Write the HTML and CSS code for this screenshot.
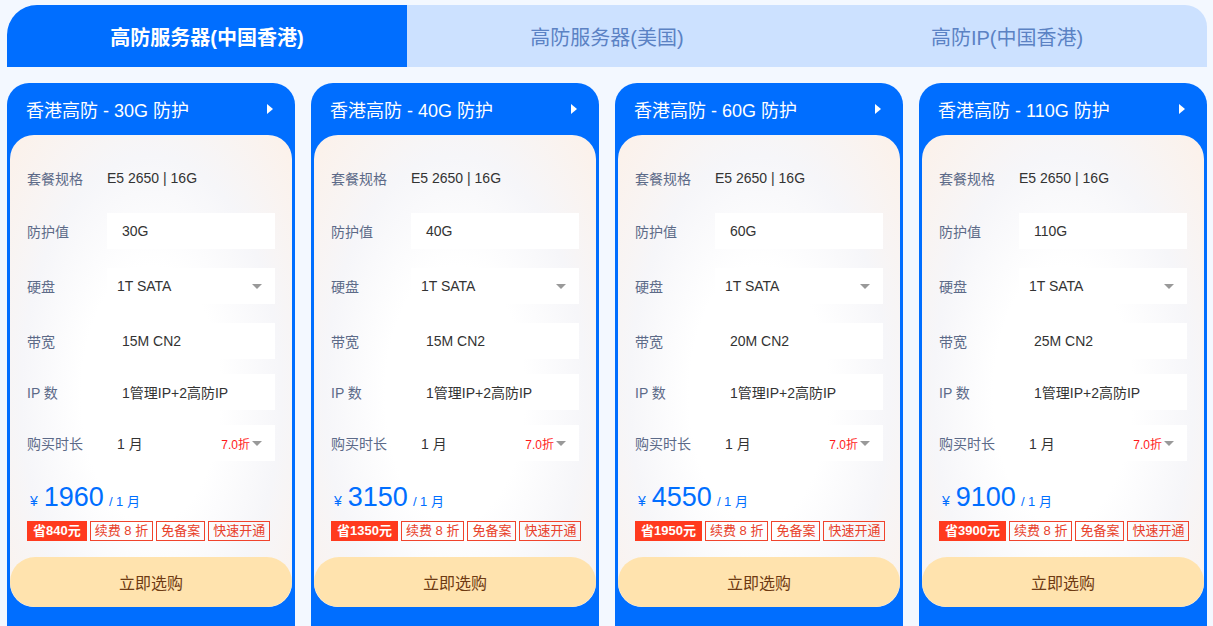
FILE: index.html
```html
<!DOCTYPE html>
<html lang="zh-CN">
<head>
    <meta charset="UTF-8">
    <meta name="viewport" content="width=device-width, initial-scale=1.0">
    <title>高防服务器</title>
    <link rel="stylesheet" href="styles.css">
</head>
<body>
    <div class="page">
        <div class="tabs">
            <div class="tab active">高防服务器(中国香港)</div>
            <div class="tab">高防服务器(美国)</div>
            <div class="tab last">高防IP(中国香港)</div>
        </div>

        <div class="cards">
            <div class="card">
                <div class="card-head">
                    <span>香港高防 - 30G 防护</span>
                    <span class="arrow"></span>
                </div>
                <div class="panel">
                    <div class="row first"><span class="label">套餐规格</span><span class="plain">E5 2650 | 16G</span></div>
                    <div class="row r1"><span class="label">防护值</span><span class="box input">30G</span></div>
                    <div class="row r2"><span class="label">硬盘</span><span class="box select">1T SATA<i class="caret"></i></span></div>
                    <div class="row r2"><span class="label">带宽</span><span class="box input">15M CN2</span></div>
                    <div class="row r3"><span class="label">IP 数</span><span class="box input">1管理IP+2高防IP</span></div>
                    <div class="row r3"><span class="label">购买时长</span><span class="box select">1 月<span class="off">7.0折</span><i class="caret"></i></span></div>
                    <div class="price"><span class="yen">¥</span><span class="num">1960</span><span class="unit">/ 1 月</span></div>
                    <div class="tags"><span class="tag save">省840元</span><span class="tag">续费 8 折</span><span class="tag">免备案</span><span class="tag">快速开通</span></div>
                    <button class="buy">立即选购</button>
                </div>
            </div>

            <div class="card">
                <div class="card-head">
                    <span>香港高防 - 40G 防护</span>
                    <span class="arrow"></span>
                </div>
                <div class="panel">
                    <div class="row first"><span class="label">套餐规格</span><span class="plain">E5 2650 | 16G</span></div>
                    <div class="row r1"><span class="label">防护值</span><span class="box input">40G</span></div>
                    <div class="row r2"><span class="label">硬盘</span><span class="box select">1T SATA<i class="caret"></i></span></div>
                    <div class="row r2"><span class="label">带宽</span><span class="box input">15M CN2</span></div>
                    <div class="row r3"><span class="label">IP 数</span><span class="box input">1管理IP+2高防IP</span></div>
                    <div class="row r3"><span class="label">购买时长</span><span class="box select">1 月<span class="off">7.0折</span><i class="caret"></i></span></div>
                    <div class="price"><span class="yen">¥</span><span class="num">3150</span><span class="unit">/ 1 月</span></div>
                    <div class="tags"><span class="tag save">省1350元</span><span class="tag">续费 8 折</span><span class="tag">免备案</span><span class="tag">快速开通</span></div>
                    <button class="buy">立即选购</button>
                </div>
            </div>

            <div class="card">
                <div class="card-head">
                    <span>香港高防 - 60G 防护</span>
                    <span class="arrow"></span>
                </div>
                <div class="panel">
                    <div class="row first"><span class="label">套餐规格</span><span class="plain">E5 2650 | 16G</span></div>
                    <div class="row r1"><span class="label">防护值</span><span class="box input">60G</span></div>
                    <div class="row r2"><span class="label">硬盘</span><span class="box select">1T SATA<i class="caret"></i></span></div>
                    <div class="row r2"><span class="label">带宽</span><span class="box input">20M CN2</span></div>
                    <div class="row r3"><span class="label">IP 数</span><span class="box input">1管理IP+2高防IP</span></div>
                    <div class="row r3"><span class="label">购买时长</span><span class="box select">1 月<span class="off">7.0折</span><i class="caret"></i></span></div>
                    <div class="price"><span class="yen">¥</span><span class="num">4550</span><span class="unit">/ 1 月</span></div>
                    <div class="tags"><span class="tag save">省1950元</span><span class="tag">续费 8 折</span><span class="tag">免备案</span><span class="tag">快速开通</span></div>
                    <button class="buy">立即选购</button>
                </div>
            </div>

            <div class="card">
                <div class="card-head">
                    <span>香港高防 - 110G 防护</span>
                    <span class="arrow"></span>
                </div>
                <div class="panel">
                    <div class="row first"><span class="label">套餐规格</span><span class="plain">E5 2650 | 16G</span></div>
                    <div class="row r1"><span class="label">防护值</span><span class="box input">110G</span></div>
                    <div class="row r2"><span class="label">硬盘</span><span class="box select">1T SATA<i class="caret"></i></span></div>
                    <div class="row r2"><span class="label">带宽</span><span class="box input">25M CN2</span></div>
                    <div class="row r3"><span class="label">IP 数</span><span class="box input">1管理IP+2高防IP</span></div>
                    <div class="row r3"><span class="label">购买时长</span><span class="box select">1 月<span class="off">7.0折</span><i class="caret"></i></span></div>
                    <div class="price"><span class="yen">¥</span><span class="num">9100</span><span class="unit">/ 1 月</span></div>
                    <div class="tags"><span class="tag save">省3900元</span><span class="tag">续费 8 折</span><span class="tag">免备案</span><span class="tag">快速开通</span></div>
                    <button class="buy">立即选购</button>
                </div>
            </div>
        </div>
    </div>
</body>
</html>
```
FILE: styles.css
```css
body {
    margin: 0;
    background: #f3f8ff;
    font-family: "Liberation Sans", "Noto Sans CJK SC", sans-serif;
    overflow: hidden;
}

.page {
    padding: 5px 6px 0 7px;
}

.tabs {
    display: flex;
    height: 62px;
}

.tab {
    flex: 1;
    display: flex;
    align-items: center;
    justify-content: center;
    background: #cce1ff;
    color: #5b82c4;
    font-size: 20px;
}

.tab.active {
    background: #006eff;
    color: #fff;
    font-weight: bold;
    border-top-left-radius: 30px;
}

.tab.last {
    border-top-right-radius: 22px;
}

.cards {
    display: flex;
    gap: 16px;
    margin-top: 16px;
}

.card {
    width: 288px;
    background: #006eff;
    border-radius: 22px 22px 0 0;
    padding: 0 3px 30px 3px;
    box-sizing: border-box;
}

.card-head {
    height: 52px;
    display: flex;
    align-items: center;
    justify-content: space-between;
    padding: 0 19px 0 16px;
    color: #fff;
    font-size: 18px;
}

.arrow {
    width: 0;
    height: 0;
    border-top: 5px solid transparent;
    border-bottom: 5px solid transparent;
    border-left: 6px solid #fff;
}

.panel {
    background: radial-gradient(ellipse at 50% 55%, #ffffff 35%, #f6f6f9 65%, #fcf1e9 100%);
    border-radius: 24px;
    display: flex;
    flex-direction: column;
}

.row {
    display: flex;
    align-items: center;
    padding: 0 17px;
    font-size: 14px;
}

.row.first {
    height: 20px;
    margin-top: 33px;
}

.row.r1 { margin-top: 25px; }
.row.r2 { margin-top: 19px; }
.row.r3 { margin-top: 15px; }

.label {
    width: 80px;
    flex-shrink: 0;
    color: #5c6a88;
}

.plain {
    color: #333;
}

.box {
    flex: 1;
    height: 36px;
    background: #fff;
    display: flex;
    align-items: center;
    color: #333;
    box-sizing: border-box;
}

.box.input {
    padding-left: 15px;
}

.box.select {
    padding: 0 13px 0 10px;
}

.off {
    margin-left: auto;
    color: #ff1a1a;
    font-size: 12px;
    margin-right: 2px;
}

.caret {
    width: 0;
    height: 0;
    margin-left: auto;
    border-left: 5px solid transparent;
    border-right: 5px solid transparent;
    border-top: 5px solid #999;
}

.off + .caret {
    margin-left: 0;
}

.price {
    display: flex;
    align-items: baseline;
    padding: 0 20px;
    margin-top: 21px;
    color: #006eff;
}

.yen {
    font-size: 14px;
    margin-right: 6px;
}

.num {
    font-size: 27px;
    margin-right: 5px;
}

.unit {
    font-size: 13px;
}

.tags {
    display: flex;
    gap: 3px;
    padding: 0 17px;
    margin-top: 8px;
}

.tag {
    height: 20px;
    line-height: 18px;
    border: 1px solid #f0432c;
    color: #e8412b;
    font-size: 13px;
    padding: 0 4px;
    box-sizing: border-box;
    white-space: nowrap;
}

.tag.save {
    background: #ff3a1e;
    border-color: #ff3a1e;
    color: #fff;
    font-weight: bold;
    padding: 0 5px;
}

.buy {
    margin-top: 16px;
    height: 50px;
    border: none;
    border-radius: 25px;
    background: #ffe3ae;
    color: #6e3a12;
    font-size: 16px;
    font-family: inherit;
    cursor: pointer;
}
```
